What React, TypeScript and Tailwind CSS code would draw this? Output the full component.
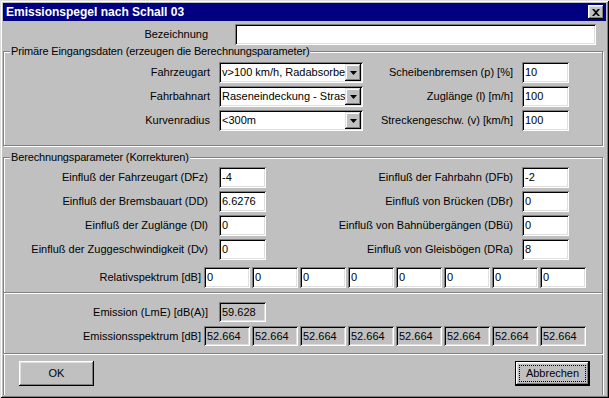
import React from "react";

const sunkenWhite =
  "bg-white shadow-[inset_1px_1px_0_#808080,inset_-1px_-1px_0_#fff,inset_2px_2px_0_#000,inset_-2px_-2px_0_#dfdfdf]";
const sunkenGray =
  "bg-[#c0c0c0] shadow-[inset_1px_1px_0_#808080,inset_-1px_-1px_0_#fff,inset_2px_2px_0_#000,inset_-2px_-2px_0_#dfdfdf]";
const raised =
  "bg-[#c0c0c0] shadow-[inset_-1px_-1px_0_#000,inset_1px_1px_0_#fff,inset_-2px_-2px_0_#808080,inset_2px_2px_0_#dfdfdf]";
const raisedCombo =
  "bg-[#c0c0c0] shadow-[inset_-1px_-1px_0_#000,inset_1px_1px_0_#dfdfdf,inset_-2px_-2px_0_#808080,inset_2px_2px_0_#fff]";

const Field = ({ value, readOnly }: { value: string; readOnly?: boolean }) => (
  <div
    className={`w-[47px] shrink-0 flex items-center pl-[3px] overflow-hidden whitespace-nowrap ${
      readOnly ? `h-[20px] ${sunkenGray}` : `h-[21px] ${sunkenWhite}`
    }`}
  >
    {value}
  </div>
);

const SpecBox = ({ value, readOnly }: { value: string; readOnly?: boolean }) => (
  <div
    className={`w-[46px] shrink-0 flex items-center pl-[3px] overflow-hidden whitespace-nowrap ${
      readOnly ? `h-[20px] ${sunkenGray}` : `h-[21px] ${sunkenWhite}`
    }`}
  >
    {value}
  </div>
);

// combo text is clipped by the drop button, like the original
const Combo = ({ value }: { value: string }) => (
  <div className={`ml-[9px] w-[144px] h-[21px] shrink-0 flex p-[2px] ${sunkenWhite}`}>
    <div className="flex-1 pl-[1px] flex items-center overflow-hidden whitespace-nowrap">
      {value}
    </div>
    <div className={`w-[16px] h-[17px] flex items-center justify-center ${raisedCombo}`}>
      <svg width="7" height="4" viewBox="0 0 7 4">
        <path d="M0 0h7L3.5 4z" fill="#000" />
      </svg>
    </div>
  </div>
);

const GroupTitle = ({ children }: { children: React.ReactNode }) => (
  <div className="-mt-[7px] ml-[6px] px-[1px] w-fit bg-[#c0c0c0] leading-[13px] tracking-[-0.15px]">
    {children}
  </div>
);

const primary = [
  ["Fahrzeugart", "v>100 km/h, Radabsorber", "Scheibenbremsen (p) [%]", "10"],
  ["Fahrbahnart", "Raseneindeckung - Strassenbahn", "Zuglänge (l) [m/h]", "100"],
  ["Kurvenradius", "<300m", "Streckengeschw. (v) [km/h]", "100"],
];

const corrections = [
  ["Einfluß der Fahrzeugart (DFz)", "-4", "Einfluß der Fahrbahn (DFb)", "-2"],
  ["Einfluß der Bremsbauart (DD)", "6.6276", "Einfluß von Brücken (DBr)", "0"],
  ["Einfluß der Zuglänge (Dl)", "0", "Einfluß von Bahnübergängen (DBü)", "0"],
  ["Einfluß der Zuggeschwindigkeit (Dv)", "0", "Einfluß von Gleisbögen (DRa)", "8"],
];

export default function App() {
  return (
    <div className="w-[609px] h-[398px] bg-[#c0c0c0] p-[3px] flex flex-col text-[11px] text-black font-['Liberation_Sans',Arial,sans-serif] shadow-[inset_1px_1px_0_#dfdfdf,inset_-1px_-1px_0_#000,inset_2px_2px_0_#fff,inset_-2px_-2px_0_#808080]">
      {/* title bar */}
      <div className="h-[18px] bg-[#000080] flex items-center justify-between pl-[3px] pr-[2px]">
        <span className="text-white font-bold text-[12px]">Emissionspegel nach Schall 03</span>
        <div className={`w-[16px] h-[14px] flex items-center justify-center ${raised}`}>
          <svg width="8" height="7" viewBox="0 0 8 7">
            <path d="M0 0h2l2 2 2-2h2L5 3.5 8 7H6L4 5 2 7H0l3-3.5z" fill="#000" />
          </svg>
        </div>
      </div>

      {/* Bezeichnung */}
      <div className="mt-[3px] h-[21px] flex items-center">
        <span className="w-[205px] text-right">Bezeichnung</span>
        <div className={`ml-[27px] w-[361px] h-[21px] ${sunkenWhite}`} />
      </div>

      {/* Primäre Eingangsdaten */}
      <div className="mt-[6px] w-[600px] border border-[#808080] shadow-[inset_1px_1px_0_#fff,1px_1px_0_#fff] pb-[14px]">
        <GroupTitle>Primäre Eingangsdaten (erzeugen die Berechnungsparameter)</GroupTitle>
        <div className="mt-[4px] flex flex-col gap-[3px]">
          {primary.map(([l, c, r, v]) => (
            <div key={l} className="h-[21px] flex items-center">
              <span className="w-[206px] text-right">{l}</span>
              <Combo value={c} />
              <span className="w-[150px] text-right pr-[9px] box-content">{r}</span>
              <Field value={v} />
            </div>
          ))}
        </div>
      </div>

      {/* Berechnungsparameter */}
      <div className="mt-[11px] w-[600px] border border-[#808080] shadow-[inset_1px_1px_0_#fff,1px_1px_0_#fff] pb-[4px]">
        <GroupTitle>Berechnungsparameter (Korrekturen)</GroupTitle>
        <div className="mt-[3px] flex flex-col gap-[3px]">
          {corrections.map(([l, lv, r, rv]) => (
            <div key={l} className="h-[21px] flex items-center">
              <span className="w-[204px] text-right">{l}</span>
              <div className="ml-[11px]">
                <Field value={lv} />
              </div>
              <span className="w-[247px] text-right pr-[9px] box-content">{r}</span>
              <Field value={rv} />
            </div>
          ))}
        </div>
        <div className="mt-[7px] h-[21px] flex items-center">
          <span className="w-[197px] text-right">Relativspektrum [dB]</span>
          <div className="ml-[3px] flex gap-[2px]">
            {Array.from({ length: 8 }).map((_, i) => (
              <SpecBox key={i} value="0" />
            ))}
          </div>
        </div>
      </div>

      {/* Emission */}
      <div className="w-[600px] border-x border-b border-[#808080] shadow-[inset_1px_0_0_#fff,1px_1px_0_#fff] pt-[9px] pb-[7px] flex flex-col gap-[4px]">
        <div className="h-[20px] flex items-center">
          <span className="w-[204px] text-right">Emission (LmE) [dB(A)]</span>
          <div className="ml-[11px]">
            <Field value="59.628" readOnly />
          </div>
        </div>
        <div className="h-[20px] flex items-center">
          <span className="w-[197px] text-right">Emissionsspektrum [dB]</span>
          <div className="ml-[3px] flex gap-[2px]">
            {Array.from({ length: 8 }).map((_, i) => (
              <SpecBox key={i} value="52.664" readOnly />
            ))}
          </div>
        </div>
      </div>

      {/* buttons */}
      <div className="mt-[1px] flex-1 w-[600px] border-x border-[#808080] shadow-[inset_1px_0_0_#fff,1px_0_0_#fff] flex justify-between items-start pt-[6px] pl-[15px] pr-[12px]">
        <button className={`w-[75px] h-[25px] flex items-center justify-center ${raised}`}>OK</button>
        <button className="w-[75px] h-[25px] border border-black">
          <div className={`w-full h-full p-[3px] ${raised}`}>
            <div className="w-full h-full border border-dotted border-black flex items-center justify-center">
              Abbrechen
            </div>
          </div>
        </button>
      </div>
    </div>
  );
}
